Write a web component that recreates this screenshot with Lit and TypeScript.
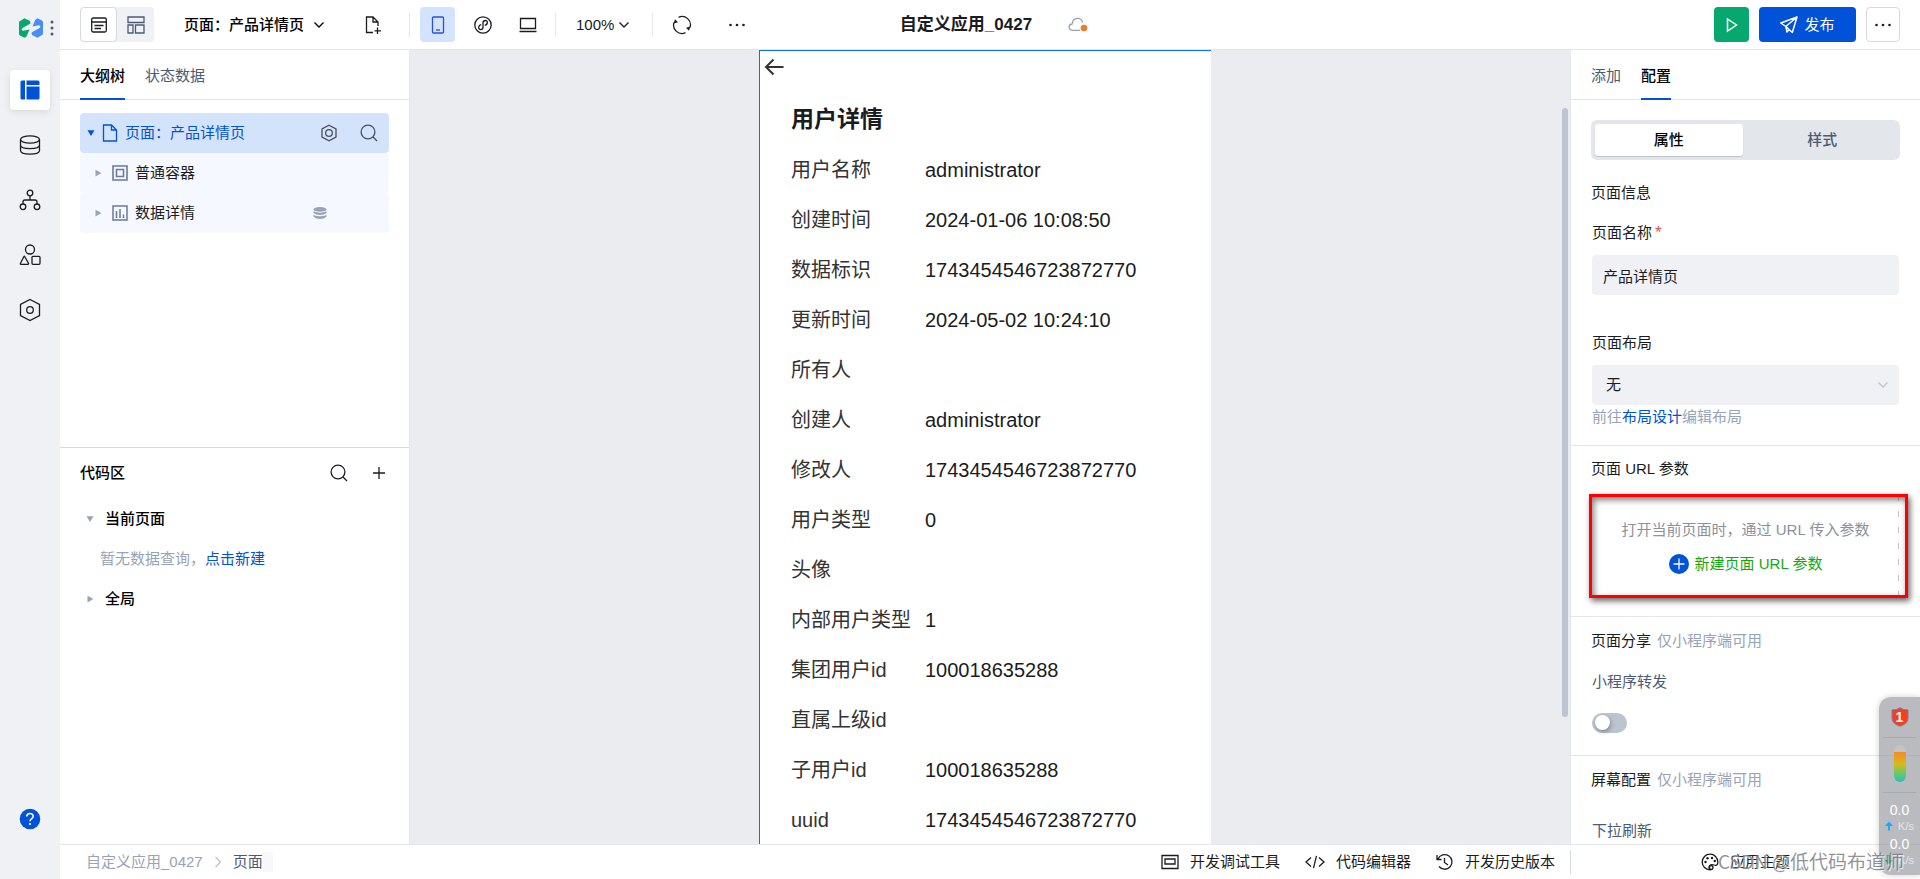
import { LitElement, html, css, svg, TemplateResult } from "lit";
import { customElement, state } from "lit/decorators.js";

const icon = (w: number, h: number, body: TemplateResult, cls = "") => html`
  <svg class=${cls} width=${w} height=${h} viewBox="0 0 ${w} ${h}" fill="none"
    stroke="currentColor" stroke-width="1.3" aria-hidden="true">${body}</svg>`;

const icons = {
  logo: () => icon(24, 20, svg`
    <path d="M0 4.500Q0 3.500 1 3L5.500 .3 11 3 11.500 5.500 3.500 10Q1.500 12 4 12.700L10.500 11.500 7.500 18.500 5.500 19.800 1 17.500Q0 17 0 16Z" fill="#07a870" stroke="none"/>
    <path d="M24 15.500Q24 16.500 23 17L18.500 19.700 13 17 12.500 14.500 20.500 10Q22.500 8 20 7.300L13.500 8.500 16.500 1.500 18.500 .2 23 2.500Q24 3 24 4Z" fill="#4a8df5" stroke="none"/>`),
  dots: () => icon(4, 16, svg`<g fill="#4b5b76" stroke="none"><circle cx="2" cy="2" r="1.500"/><circle cx="2" cy="8" r="1.500"/><circle cx="2" cy="14" r="1.500"/></g>`),
  layout: () => icon(20, 20, svg`<g fill="#0052d9" stroke="none"><path d="M2 .5H5V19.500H2Q.5 19.500 .5 18V2Q.5 .5 2 .5Z"/><path d="M6.500 .5H18Q19.500 .5 19.500 2V5H6.500Z"/><path d="M6.500 6.500H19.500V18Q19.500 19.500 18 19.500H6.500Z"/></g>`),
  database: () => icon(22, 20, svg`<ellipse cx="11" cy="4.500" rx="9.500" ry="3.600"/><path d="M1.500 4.500V15.500C1.500 20.300 20.500 20.300 20.500 15.500V4.500M1.500 10C1.500 14.800 20.500 14.800 20.500 10"/>`),
  flow: () => icon(22, 22, svg`<circle cx="11" cy="4" r="2.800"/><circle cx="4" cy="17.800" r="2.800"/><circle cx="18" cy="17.800" r="2.800"/><path d="M11 6.800V11M4 15V13Q4 11 6 11H16Q18 11 18 13V15"/>`),
  shapes: () => icon(22, 22, svg`<circle cx="11" cy="5.500" r="4.500"/><path d="M5.500 12.300 9.600 19.500Q9.600 20.300 9 20.300H2Q1 20.300 1.400 19.500L4.800 12.700Q5.200 12 5.500 12.300Z"/><rect x="13" y="12.300" width="8" height="8" rx="1"/>`),
  hex: () => icon(22, 24, svg`<path d="M11 1.500 20.500 6.500V17.500L11 22.500 1.500 17.500V6.500Z"/><circle cx="11" cy="12" r="3.300"/>`),
  help: () => icon(22, 22, svg`<circle cx="11" cy="11" r="10.300" fill="#0052d9" stroke="none"/><path d="M7.800 8.600C7.800 4.400 14.200 4.600 14.200 8.300 14.200 10.500 11 10.600 11 13.300" stroke="#fff" stroke-width="1.600"/><circle cx="11" cy="16" r="1.100" fill="#fff" stroke="none"/>`),
  outline: () => icon(16, 16, svg`<rect x=".7" y="1" width="14.600" height="14" rx="1.500"/><path d="M.7 5H15.300M3.500 8.500H12.500M3.500 11.500H10"/>`),
  blocks: () => icon(18, 18, svg`<path d="M1 1H17V6.500H1ZM1 9H6V17H1ZM8.500 9H17V17H8.500Z"/>`),
  down: () => icon(12, 8, svg`<path d="M1.500 1.500 6 6 10.500 1.500"/>`),
  pageAdd: () => icon(17, 18, svg`<path d="M8 16.500H1.500V1H8L13 6V10M8 1V6H13M12.500 11.500V18M9.500 14.800H16"/>`),
  phone: () => icon(14, 18, svg`<rect x="1.500" y="1" width="11" height="16" rx="1"/><path d="M5 14H9"/>`),
  mini: () => icon(18, 18, svg`<circle cx="9" cy="9" r="8.200"/><path d="M7.200 8.700C3.800 9.500 4 13.600 6.600 13.600 8 13.600 9 12.500 9 11.200V6.800C9 5.500 10 4.500 11.400 4.500 14 4.500 14.200 8.500 10.800 9.300"/>`),
  laptop: () => icon(18, 16, svg`<path d="M1.500 1.500H16.500V11.500H1.500ZM.5 14.500H17.500"/>`),
  refresh: () => icon(20, 20, svg`<path d="M6.500 2.300A8.300 8.300 0 0 1 17.900 12.600M13.500 17.700A8.300 8.300 0 0 1 2.100 7.400"/><path d="M1.600 8.600 3 4.300 6 7.200ZM18.400 11.400 17 15.700 14 12.800Z" fill="currentColor" stroke="none"/>`),
  more: () => icon(18, 4, svg`<g fill="currentColor" stroke="none"><circle cx="2.500" cy="2" r="1.300"/><circle cx="9" cy="2" r="1.300"/><circle cx="15.500" cy="2" r="1.300"/></g>`),
  cloud: () => icon(20, 16, svg`<path d="M12 13.300H4.500C-.2 13 .2 7.200 4.200 7 4.500-.5 14-.2 14.500 5.500" stroke="#97a3b7"/><circle cx="16" cy="11" r="3.300" fill="#ed7b2f" stroke="none"/>`),
  play: () => icon(12, 16, svg`<path d="M1.500 2 10.500 8 1.500 14Z" stroke-width="1.500"/>`),
  send: () => icon(18, 18, svg`<path d="M17 1 .8 7 5.800 10.500 12.300 16.500ZM17 1 5.800 10.500 7 16 9 13.500" stroke-width="1.500" stroke-linejoin="round"/>`),
  file: () => icon(16, 18, svg`<path d="M1.500 1H9.500L14.500 6V17H1.500ZM9.500 1V6H14.500"/>`),
  gear: () => icon(16, 18, svg`<path d="M8 1.200 15 5V13L8 16.800 1 13V5Z"/><circle cx="8" cy="9" r="3.300"/>`),
  search: () => icon(18, 18, svg`<circle cx="8" cy="8" r="6.900"/><path d="M12.800 12.800 17 17"/>`),
  plus: () => icon(12, 12, svg`<path d="M6 0V12M0 6H12"/>`),
  box: () => icon(16, 16, svg`<path d="M1 1H15V15H1ZM4.500 4.500H11.500V11.500H4.500Z" stroke-width="1.600"/>`),
  chart: () => icon(16, 16, svg`<path d="M1 1H15V15H1ZM4.500 6V13M8 4V13M11.500 9.500V13" stroke-width="1.500"/>`),
  store: () => icon(14, 12, svg`<g fill="#97a3b7" stroke="none"><ellipse cx="7" cy="2.400" rx="6.500" ry="2.400"/><path d="M.5 4.300Q7 7 13.500 4.300V6Q11 8 7 8T.5 6ZM.5 8Q7 10.700 13.500 8V9.800Q11 12 7 12T.5 9.800Z"/></g>`),
  caretDown: () => icon(8, 6, svg`<path d="M.5 .3H7.500L4 6Z" fill="currentColor" stroke="none"/>`),
  caretRight: () => icon(8, 8, svg`<path d="M1.500 .7V7.500L7.300 4Z" fill="currentColor" stroke="none"/>`),
  right: () => icon(8, 12, svg`<path d="M1.500 1 6.500 6 1.500 11"/>`),
  back: () => icon(20, 18, svg`<path d="M9.500 1.500 2 9 9.500 16.500M2 9H19.500" stroke="#333" stroke-width="2"/>`),
  add: () => icon(20, 20, svg`<circle cx="10" cy="10" r="10" fill="#0052d9" stroke="none"/><path d="M10 4.500V15.500M4.500 10H15.500" stroke="#fff"/>`),
  debug: () => icon(18, 16, svg`<path d="M1 1.500H17V14.500H1ZM4 5H14V10H4Z"/>`),
  code: () => icon(20, 14, svg`<path d="M6 2.500 1 7 6 11.500M14 2.500 19 7 14 11.500M11.500 .8 8.500 13.200"/>`),
  history: () => icon(18, 18, svg`<path d="M2 6A7.300 7.300 0 1 1 3 13.500M1 2V6.500H5.500M8.500 5V9.500L12 12"/>`),
  theme: () => icon(18, 18, svg`<path d="M9 1.200A7.700 7.700 0 1 0 9 16.800C7.500 12.500 9.500 10.800 13 12 16 13 16.800 11.500 16.800 9A7.700 7.700 0 0 0 9 1.200Z"/><g fill="currentColor" stroke="none"><circle cx="4.500" cy="9" r="1.200"/><circle cx="6.500" cy="5.300" r="1.200"/><circle cx="11" cy="5" r="1.200"/><circle cx="13.800" cy="8" r="1.200"/></g><circle cx="10" cy="14.500" r="2"/>`),
  up: () => icon(8, 10, svg`<path d="M4 .5 8 5H5V9.500H3V5H0Z" fill="#1aa7ff" stroke="none"/>`),
  downArrow: () => icon(8, 10, svg`<path d="M4 9.500 8 5H5V.5H3V5H0Z" fill="#0a9b58" stroke="none"/>`),
  shield: () => icon(18, 20, svg`<path d="M9 .8Q12 3 17 3V11Q17 16.500 9 19.300 1 16.500 1 11V3Q6 3 9 .8Z" fill="#f5401b" stroke="#7a77b0" stroke-width="1"/>`),
};

const base = css`
  :host {
    font-family: "Liberation Sans", "Noto Sans CJK SC", sans-serif;
    font-size: 15px;
    line-height: 20px;
    color: #1a1c21;
  }
  * { box-sizing: border-box; }
  svg { display: block; flex: none; }
  button, input, select {
    font: inherit;
    color: inherit;
    background: none;
    border: 0;
    margin: 0;
    padding: 0;
  }
  button { display: flex; align-items: center; justify-content: center; cursor: pointer; }
  a { color: #0052d9; text-decoration: none; }
  h1, h2, dl, dd, dt, p, ul { margin: 0; padding: 0; font-size: inherit; font-weight: inherit; }
  .tabs {
    display: flex;
    flex: none;
    gap: 20px;
    height: 50px;
    padding: 0 20px;
    border-bottom: 1px solid #e3e6eb;
    color: #4b5b76;
  }
  .tab { height: 50px; padding-top: 3px; border-bottom: 2px solid transparent; }
  .tab.active { color: #000; border-color: #0052d9; font-weight: 500; }
`;

@customElement("side-rail")
class SideRail extends LitElement {
  static styles = [base, css`
    :host { display: flex; flex-direction: column; align-items: center; background: #f0f1f5; }
    .brand { display: flex; align-items: center; gap: 7px; height: 55px; padding-left: 12px; }
    nav { display: flex; flex-direction: column; gap: 15px; padding-top: 15px; }
    .item { width: 40px; height: 40px; border-radius: 4px; color: #1a1c21; }
    .item.active { background: #fff; box-shadow: 0 2px 6px rgba(0, 0, 0, 0.1); }
    .help { margin: auto 0 40px; }
  `];
  render() {
    const items: [string, () => TemplateResult][] = [
      ["设计", icons.layout], ["数据", icons.database], ["流程", icons.flow],
      ["组件", icons.shapes], ["设置", icons.hex],
    ];
    return html`
      <div class="brand">${icons.logo()}${icons.dots()}</div>
      <nav>${items.map(([name, glyph], i) => html`
        <button class="item ${i === 0 ? "active" : ""}" aria-label=${name}>${glyph()}</button>`)}
      </nav>
      <button class="item help" aria-label="帮助">${icons.help()}</button>`;
  }
}

@customElement("top-bar")
class TopBar extends LitElement {
  static styles = [base, css`
    :host {
      display: grid;
      grid-template-columns: 1fr auto 1fr;
      align-items: center;
      height: 50px;
      padding: 0 20px;
      background: #fff;
      border-bottom: 1px solid #e3e6eb;
    }
    .group { display: flex; align-items: center; }
    .switch { display: flex; background: #f0f1f5; border-radius: 4px; color: #4b5b76; }
    .tool { width: 37px; height: 35px; border-radius: 4px; }
    .tool.picked { background: #fff; border: 1px solid #d5d9e2; color: #1a1c21; }
    .tool.device { width: 35px; margin-right: 10px; }
    .tool.device.active { background: #d4e3fc; color: #2a4fe0; }
    .page { gap: 9px; margin-left: 30px; font-weight: 500; color: #000; }
    .new { margin-left: 30px; }
    .line { width: 1px; height: 24px; background: #e3e6eb; }
    .line.first { margin: 0 10px 0 17px; }
    .zoom { gap: 4px; margin: 0 22px 0 20px; }
    .sync { margin: 0 18px 0 10px; }
    .center { display: flex; align-items: center; gap: 36px; padding-left: 8px; }
    .center h1 { font-size: 17px; font-weight: 700; color: #1a1c21; }
    .right { justify-content: flex-end; gap: 10px; }
    .run { width: 35px; height: 35px; border-radius: 4px; background: #07a870; color: #fff; }
    .publish { width: 97px; height: 35px; gap: 6px; border-radius: 4px; background: #0052d9; color: #fff; }
    .menu { width: 34px; height: 35px; border-radius: 4px; border: 1px solid #d5d9e2; }
  `];
  render() {
    return html`
      <div class="group">
        <div class="switch">
          <button class="tool picked" aria-label="大纲">${icons.outline()}</button>
          <button class="tool" aria-label="区块">${icons.blocks()}</button>
        </div>
        <button class="page">页面：产品详情页${icons.down()}</button>
        <button class="tool new" aria-label="新建页面">${icons.pageAdd()}</button>
        <span class="line first"></span>
        <button class="tool device active" aria-label="手机">${icons.phone()}</button>
        <button class="tool device" aria-label="小程序">${icons.mini()}</button>
        <button class="tool device" aria-label="电脑">${icons.laptop()}</button>
        <span class="line"></span>
        <button class="zoom">100%${icons.down()}</button>
        <span class="line"></span>
        <button class="tool sync" aria-label="刷新">${icons.refresh()}</button>
        <button class="tool" aria-label="更多">${icons.more()}</button>
      </div>
      <div class="center"><h1>自定义应用_0427</h1>${icons.cloud()}</div>
      <div class="group right">
        <button class="run" aria-label="预览">${icons.play()}</button>
        <button class="publish">${icons.send()}发布</button>
        <button class="menu" aria-label="更多操作">${icons.more()}</button>
      </div>`;
  }
}

@customElement("outline-panel")
class OutlinePanel extends LitElement {
  static styles = [base, css`
    :host { display: flex; flex-direction: column; min-height: 0; background: #fff; border-right: 1px solid #e3e6eb; }
    section { flex: 1; min-height: 0; overflow: hidden; }
    .code { border-top: 1px solid #d5d9e2; }
    .tree { padding: 13px 20px; }
    .row { display: flex; align-items: center; height: 40px; border-radius: 4px; background: #f5f8ff; padding: 0 11px 0 14px; }
    .row .name { flex: 1; margin-left: 7px; }
    .row .caret { color: #97a3b7; margin-right: 10px; }
    .row .kind { color: #6b7a99; }
    .row.current { background: #d4e3fc; color: #0052d9; padding-left: 7px; }
    .row.current .caret { color: #0052d9; margin-right: 7px; }
    .row.current .kind { color: #0052d9; }
    .actions { display: flex; gap: 23px; color: #4b5058; }
    .store { padding-right: 51px; }
    .head { display: flex; align-items: center; gap: 25px; height: 51px; padding: 0 24px 0 20px; }
    .head h2 { flex: 1; font-weight: 500; color: #000; }
    .group { display: flex; align-items: center; gap: 11px; height: 40px; padding-left: 26px; font-weight: 500; color: #000; }
    .group .caret { color: #97a3b7; }
    .empty { height: 40px; padding: 10px 0 0 40px; color: #97a3b7; }
  `];
  render() {
    return html`
      <section>
        <div class="tabs" role="tablist">
          <button class="tab active" role="tab">大纲树</button>
          <button class="tab" role="tab">状态数据</button>
        </div>
        <div class="tree">
          <div class="row current">
            <span class="caret">${icons.caretDown()}</span><span class="kind">${icons.file()}</span>
            <span class="name">页面：产品详情页</span>
            <div class="actions">
              <button aria-label="设置">${icons.gear()}</button>
              <button aria-label="搜索">${icons.search()}</button>
            </div>
          </div>
          <div class="row">
            <span class="caret">${icons.caretRight()}</span><span class="kind">${icons.box()}</span>
            <span class="name">普通容器</span>
          </div>
          <div class="row">
            <span class="caret">${icons.caretRight()}</span><span class="kind">${icons.chart()}</span>
            <span class="name">数据详情</span><span class="store">${icons.store()}</span>
          </div>
        </div>
      </section>
      <section class="code">
        <div class="head">
          <h2>代码区</h2>
          <button aria-label="搜索代码">${icons.search()}</button>
          <button aria-label="新建代码">${icons.plus()}</button>
        </div>
        <div class="group"><span class="caret">${icons.caretDown()}</span>当前页面</div>
        <p class="empty">暂无数据查询，<a href="#">点击新建</a></p>
        <div class="group"><span class="caret">${icons.caretRight()}</span>全局</div>
      </section>`;
  }
}

@customElement("page-canvas")
class PageCanvas extends LitElement {
  static styles = [base, css`
    :host { display: flex; min-width: 0; min-height: 0; overflow: hidden; background: #ebecf0; }
    .stage { flex: 1; display: flex; justify-content: center; }
    .page { width: 100%; max-width: 452px; background: #fff; border: 1px solid #0a6cff; border-width: 1px 0 0 1px; padding: 7px 4px; }
    h2 { margin: 25px 27px 8px; font-size: 23px; line-height: 36px; font-weight: 700; }
    dl { margin: 0 27px; }
    .field { display: flex; height: 50px; align-items: center; font-size: 20px; line-height: 30px; }
    dt { width: 134px; flex: none; color: #333; }
    .track { width: 10px; padding: 58px 2px 0; }
    .thumb { height: 609px; border-radius: 3px; background: #bcc4d0; }
  `];
  render() {
    const fields = [
      ["用户名称", "administrator"], ["创建时间", "2024-01-06 10:08:50"],
      ["数据标识", "1743454546723872770"], ["更新时间", "2024-05-02 10:24:10"],
      ["所有人", ""], ["创建人", "administrator"], ["修改人", "1743454546723872770"],
      ["用户类型", "0"], ["头像", ""], ["内部用户类型", "1"], ["集团用户id", "100018635288"],
      ["直属上级id", ""], ["子用户id", "100018635288"], ["uuid", "1743454546723872770"],
    ];
    return html`
      <div class="stage">
        <div class="page">
          <button aria-label="返回">${icons.back()}</button>
          <h2>用户详情</h2>
          <dl>${fields.map(([k, v]) => html`<div class="field"><dt>${k}</dt><dd>${v}</dd></div>`)}</dl>
        </div>
      </div>
      <div class="track"><div class="thumb"></div></div>`;
  }
}

@customElement("config-panel")
class ConfigPanel extends LitElement {
  @state() private share = false;
  static styles = [base, css`
    :host { display: flex; flex-direction: column; min-height: 0; overflow: hidden; background: #fff; border-left: 1px solid #e3e6eb; }
    .segments { display: flex; flex: none; gap: 6px; height: 40px; margin: 20px 20px 0; padding: 4px; border-radius: 6px; background: #e3e6eb; }
    .segment { flex: 1; height: 32px; border-radius: 3px; font-weight: 500; color: #4b5b76; }
    .segment.active { background: #fff; color: #000; box-shadow: 0 1px 1px #bcc4d0; }
    section { flex: none; padding: 13px 20px 0; border-bottom: 1px solid #e3e6eb; }
    .info { padding-top: 23px; padding-bottom: 18px; }
    .url { padding-bottom: 19px; }
    .share { padding-bottom: 22px; padding-top: 14px; }
    .screen { padding-top: 14px; border-bottom: 0; }
    h2 { height: 20px; color: #1a1c21; }
    .note { margin-left: 6px; color: #97a3b7; }
    .form { padding: 0 1px; }
    .label { display: block; height: 20px; margin: 20px 0 12px; }
    .label.second { margin-top: 38px; }
    .label.soft { color: #4b5b76; margin-top: 21px; margin-bottom: 21px; }
    .screen .label { margin-top: 31px; }
    .required { color: #e34d59; margin-left: 3px; font-size: 17px; }
    .text { display: block; width: 100%; height: 40px; padding: 0 11px; border-radius: 4px; background: #f0f1f5; }
    .pick { position: relative; display: block; color: #bcc4d0; }
    .pick select { width: 100%; height: 40px; padding: 0 14px; border-radius: 4px; background: #f0f1f5; color: #1a1c21; appearance: none; }
    .pick svg { position: absolute; right: 10px; top: 16px; pointer-events: none; }
    .hint { padding-top: 2px; color: #97a3b7; }
    .params { position: relative; display: flex; flex-direction: column; align-items: center; gap: 14px; height: 102px; margin: 16px 1px 0; padding-top: 25px; background: repeating-linear-gradient(#bcc4d0 0 6px, transparent 6px 16px) right top / 1px 100% no-repeat; color: #8b919e; }
    .create { gap: 6px; color: #13a80e; }
    .mark { position: absolute; inset: -1px -9px -1px -3px; border: 3px solid #f00; box-shadow: 2px 3px 6px rgba(0, 0, 0, 0.6), inset 2px 3px 6px rgba(0, 0, 0, 0.5); pointer-events: none; }
    .toggle { display: block; appearance: none; width: 35px; height: 20px; border-radius: 10px; background: #bcc4d0; cursor: pointer; }
    .toggle::before { content: ""; display: block; width: 15px; height: 15px; margin: 2px 3px; border-radius: 50%; background: #fff; box-shadow: 1px 2px 4px rgba(0, 0, 0, 0.3); }
    .toggle:checked { background: #0052d9; }
    .toggle:checked::before { margin-left: 17px; }
  `];
  render() {
    return html`
      <div class="tabs" role="tablist">
        <button class="tab" role="tab">添加</button>
        <button class="tab active" role="tab">配置</button>
      </div>
      <div class="segments">
        <button class="segment active">属性</button>
        <button class="segment">样式</button>
      </div>
      <section class="info">
        <h2>页面信息</h2>
        <div class="form">
          <label class="label" for="name">页面名称<span class="required">*</span></label>
          <input id="name" class="text" type="text" value="产品详情页" />
          <label class="label second" for="layout">页面布局</label>
          <span class="pick"><select id="layout"><option>无</option></select>${icons.down()}</span>
          <p class="hint">前往<a href="#">布局设计</a>编辑布局</p>
        </div>
      </section>
      <section class="url">
        <h2>页面 URL 参数</h2>
        <div class="params">
          <p>打开当前页面时，通过 URL 传入参数</p>
          <button class="create">${icons.add()}新建页面 URL 参数</button>
          <span class="mark"></span>
        </div>
      </section>
      <section class="share">
        <h2>页面分享<span class="note">仅小程序端可用</span></h2>
        <div class="form">
          <label class="label soft" for="share">小程序转发</label>
          <input id="share" class="toggle" type="checkbox" .checked=${this.share}
            @change=${() => { this.share = !this.share; }} />
        </div>
      </section>
      <section class="screen">
        <h2>屏幕配置<span class="note">仅小程序端可用</span></h2>
        <div class="form"><span class="label soft">下拉刷新</span></div>
      </section>`;
  }
}

@customElement("status-bar")
class StatusBar extends LitElement {
  static styles = [base, css`
    :host { display: flex; align-items: center; justify-content: space-between; height: 35px; background: #fff; border-top: 1px solid #e3e6eb; }
    .crumbs { display: flex; align-items: center; gap: 11px; padding-left: 26px; color: #97a3b7; }
    .crumbs a { color: #97a3b7; }
    .crumbs svg { color: #bcc4d0; }
    .here { padding-right: 10px; color: #4b5b76; background: linear-gradient(90deg, #fff 30px, #f7f8fa 30px); }
    .right { display: flex; align-items: center; }
    .tools { display: flex; gap: 25px; padding-right: 15px; }
    .tools button, .theme { gap: 11px; }
    .theme { width: 350px; height: 24px; border-left: 1px solid #d5d9e2; }
  `];
  render() {
    return html`
      <div class="crumbs"><a href="#">自定义应用_0427</a>${icons.right()}<span class="here">页面</span></div>
      <div class="right">
        <div class="tools">
          <button>${icons.debug()}开发调试工具</button>
          <button>${icons.code()}代码编辑器</button>
          <button>${icons.history()}开发历史版本</button>
        </div>
        <button class="theme">${icons.theme()}应用主题</button>
      </div>`;
  }
}

@customElement("speed-widget")
class SpeedWidget extends LitElement {
  static styles = [base, css`
    :host { display: flex; flex-direction: column; align-items: center; width: 41px; height: 178px; padding-top: 10px; border-radius: 12px 0 0 12px; background: rgba(150, 152, 158, 0.66); box-shadow: 0 0 6px rgba(0, 0, 0, 0.2); color: #fff; }
    .badge { display: grid; place-items: center; height: 20px; font-size: 14px; font-weight: 700; }
    .badge > * { grid-area: 1 / 1; z-index: 0; }
    .rule { width: 33px; height: 1px; margin: 10px 0 7px; background: #a3acb0; }
    .gauge { width: 12px; height: 37px; padding-top: 7px; border-radius: 6px; background: #c3c4c7; overflow: hidden; }
    .fill { height: 30px; background: linear-gradient(#f08c28, #d9b81c 40%, #6cc964 70%, #2bbcc4); }
    .speed { margin-top: 2px; font-size: 14px; line-height: 16px; }
    .unit { display: flex; align-items: center; gap: 5px; font-size: 11px; line-height: 16px; color: #e3e6eb; }
  `];
  render() {
    return html`
      <div class="badge">${icons.shield()}<span>1</span></div>
      <div class="rule"></div>
      <div class="gauge"><div class="fill"></div></div>
      <div class="rule"></div>
      <div class="speed">0.0</div><div class="unit">${icons.up()}K/s</div>
      <div class="speed">0.0</div><div class="unit">${icons.downArrow()}K/s</div>`;
  }
}

@customElement("app-root")
class AppRoot extends LitElement {
  static styles = [base, css`
    :host {
      position: relative;
      display: grid;
      grid-template: "rail top top top" 50px "rail outline canvas config" minmax(0, 1fr) "rail status status status" 35px / 60px 350px minmax(0, 1fr) 350px;
      height: 100vh;
      overflow: hidden;
    }
    side-rail { grid-area: rail; }
    top-bar { grid-area: top; }
    outline-panel { grid-area: outline; }
    page-canvas { grid-area: canvas; }
    config-panel { grid-area: config; }
    status-bar { grid-area: status; }
    .widget { position: absolute; right: 0; bottom: 4px; }
    .watermark { position: absolute; right: 16px; bottom: 4px; font: 19px/28px "Noto Sans CJK SC", sans-serif; color: rgba(110, 112, 118, 0.75); text-shadow: 1px 1px 1px rgba(255, 255, 255, 0.8); pointer-events: none; }
  `];
  render() {
    return html`
      <side-rail></side-rail>
      <top-bar></top-bar>
      <outline-panel></outline-panel>
      <page-canvas></page-canvas>
      <config-panel></config-panel>
      <status-bar></status-bar>
      <speed-widget class="widget"></speed-widget>
      <span class="watermark">CSDN @低代码布道师</span>`;
  }
}
